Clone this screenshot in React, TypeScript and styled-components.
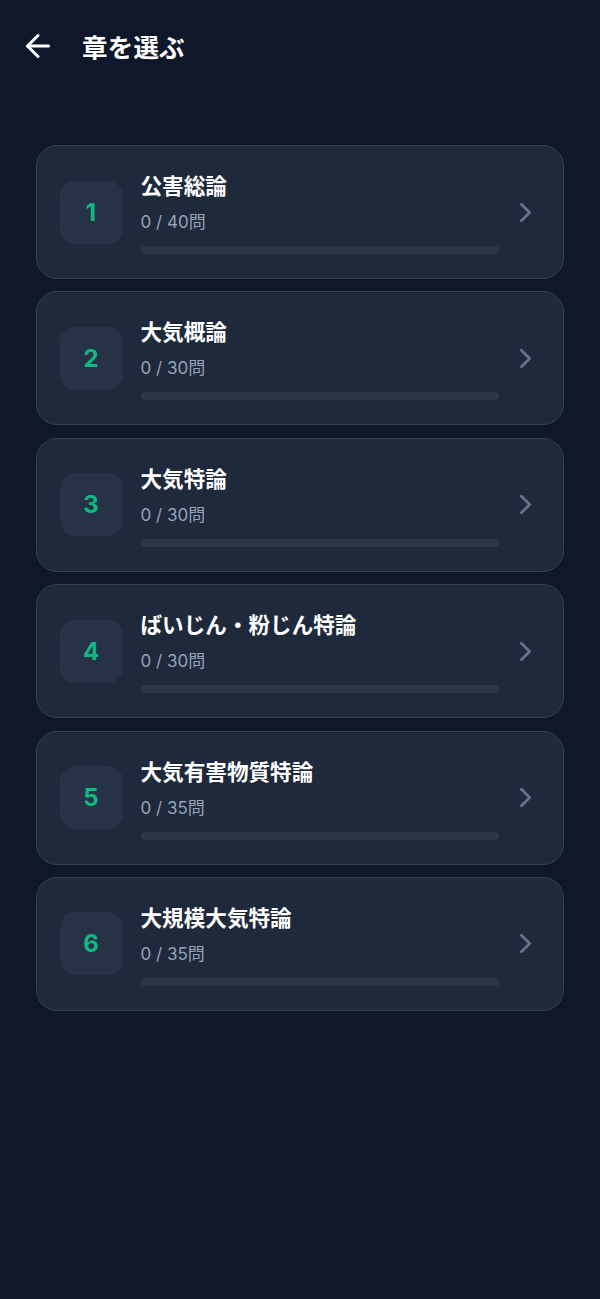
import React from "react";
import styled, { createGlobalStyle } from "styled-components";
import { ArrowLeft, ChevronRight } from "lucide-react";

const GlobalStyle = createGlobalStyle`
  html, body {
    margin: 0;
    padding: 0;
    background: #0f172a;
  }
  body {
    font-family: Inter, "Noto Sans CJK JP", "Noto Sans", sans-serif;
    -webkit-font-smoothing: antialiased;
  }
  * { box-sizing: border-box; }
`;

const Page = styled.div`
  min-height: 1299px;
  background: #0f172a;
  color: #ffffff;
`;

const Header = styled.header`
  display: flex;
  align-items: center;
  gap: 26px;
  height: 92px;
  padding: 0 20px;
`;

const BackButton = styled.button`
  display: flex;
  align-items: center;
  justify-content: center;
  width: 36px;
  height: 36px;
  padding: 0;
  border: none;
  background: transparent;
  color: #ffffff;
  cursor: pointer;
`;

const HeaderTitle = styled.h1`
  margin: 0;
  font-family: "Noto Sans CJK JP", sans-serif;
  font-size: 25.5px;
  font-weight: 700;
  line-height: 36px;
  letter-spacing: 0.2px;
`;

const List = styled.main`
  display: flex;
  flex-direction: column;
  gap: 12.4px;
  padding: 53px 36px 0;
`;

const Card = styled.div`
  display: flex;
  align-items: center;
  height: 134px;
  padding: 0 21px 0 22.5px;
  background: #1e293b;
  border: 1.5px solid #334155;
  border-radius: 21px;
`;

const NumberBox = styled.div`
  flex: none;
  display: flex;
  align-items: center;
  justify-content: center;
  width: 63px;
  height: 63px;
  border-radius: 15px;
  background: #263346;
  color: #10b981;
  font-family: Inter, sans-serif;
  font-size: 24px;
  font-weight: 700;
`;

const Content = styled.div`
  flex: 1;
  display: flex;
  flex-direction: column;
  margin-left: 18px;
  min-width: 0;
`;

const Title = styled.div`
  font-family: "Noto Sans CJK JP", sans-serif;
  font-size: 21.6px;
  font-weight: 700;
  line-height: 30px;
  color: #ffffff;
`;

const Count = styled.div`
  margin-top: 9px;
  font-family: Inter, "Noto Sans CJK JP", sans-serif;
  font-size: 17px;
  line-height: 27px;
  color: #94a3b8;
`;

const Track = styled.div`
  margin-top: 10px;
  height: 8px;
  border-radius: 999px;
  background: #2b3748;
  overflow: hidden;
`;

const Fill = styled.div`
  height: 100%;
  background: #10b981;
  border-radius: 999px;
`;

const Chevron = styled.div`
  flex: none;
  display: flex;
  margin-left: 10px;
  color: #64748b;
`;

const chapters = [
  { n: 1, title: "公害総論", total: 40 },
  { n: 2, title: "大気概論", total: 30 },
  { n: 3, title: "大気特論", total: 30 },
  { n: 4, title: "ばいじん・粉じん特論", total: 30 },
  { n: 5, title: "大気有害物質特論", total: 35 },
  { n: 6, title: "大規模大気特論", total: 35 },
];

export default function App() {
  return (
    <Page>
      <GlobalStyle />
      <Header>
        <BackButton aria-label="戻る">
          <ArrowLeft size={36} strokeWidth={2} />
        </BackButton>
        <HeaderTitle>章を選ぶ</HeaderTitle>
      </Header>
      <List>
        {chapters.map((c) => {
          const done = 0;
          return (
            <Card key={c.n}>
              <NumberBox>{c.n}</NumberBox>
              <Content>
                <Title>{c.title}</Title>
                <Count>
                  {done} / {c.total}問
                </Count>
                <Track>
                  <Fill style={{ width: `${(done / c.total) * 100}%` }} />
                </Track>
              </Content>
              <Chevron>
                <ChevronRight size={33} strokeWidth={2} />
              </Chevron>
            </Card>
          );
        })}
      </List>
    </Page>
  );
}
